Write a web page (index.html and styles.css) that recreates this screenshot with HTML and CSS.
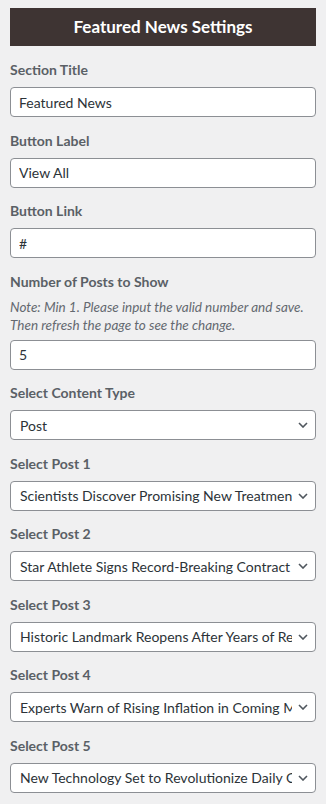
FILE: index.html
```html
<!DOCTYPE html>
<html lang="en">

<head>
    <meta charset="UTF-8">
    <meta name="viewport" content="width=device-width, initial-scale=1.0">
    <title>Featured News Settings</title>
    <link rel="stylesheet" href="styles.css">
</head>

<body>
    <div class="panel">
        <h2 class="panel-title">Featured News Settings</h2>

        <div class="field">
            <label for="section-title">Section Title</label>
            <input id="section-title" class="text-input" type="text" value="Featured News">
        </div>

        <div class="field">
            <label for="button-label">Button Label</label>
            <input id="button-label" class="text-input" type="text" value="View All">
        </div>

        <div class="field">
            <label for="button-link">Button Link</label>
            <input id="button-link" class="text-input" type="text" value="#">
        </div>

        <div class="field">
            <label for="post-count">Number of Posts to Show</label>
            <p class="note">Note: Min 1. Please input the valid number and save. Then refresh the page to see the change.</p>
            <input id="post-count" class="text-input" type="text" value="5">
        </div>

        <div class="field">
            <label for="content-type">Select Content Type</label>
            <div class="select-wrap">
                <select id="content-type" class="select">
                    <option>Post</option>
                </select>
                <svg class="chevron" viewBox="0 0 10 6"><path d="M1 1 L5 5 L9 1" /></svg>
            </div>
        </div>

        <div class="field">
            <label for="post-1">Select Post 1</label>
            <div class="select-wrap">
                <select id="post-1" class="select">
                    <option>Scientists Discover Promising New Treatment for Alzheimer's</option>
                </select>
                <svg class="chevron" viewBox="0 0 10 6"><path d="M1 1 L5 5 L9 1" /></svg>
            </div>
        </div>

        <div class="field">
            <label for="post-2">Select Post 2</label>
            <div class="select-wrap">
                <select id="post-2" class="select">
                    <option>Star Athlete Signs Record-Breaking Contract</option>
                </select>
                <svg class="chevron" viewBox="0 0 10 6"><path d="M1 1 L5 5 L9 1" /></svg>
            </div>
        </div>

        <div class="field">
            <label for="post-3">Select Post 3</label>
            <div class="select-wrap">
                <select id="post-3" class="select">
                    <option>Historic Landmark Reopens After Years of Restoration</option>
                </select>
                <svg class="chevron" viewBox="0 0 10 6"><path d="M1 1 L5 5 L9 1" /></svg>
            </div>
        </div>

        <div class="field">
            <label for="post-4">Select Post 4</label>
            <div class="select-wrap">
                <select id="post-4" class="select">
                    <option>Experts Warn of Rising Inflation in Coming Months</option>
                </select>
                <svg class="chevron" viewBox="0 0 10 6"><path d="M1 1 L5 5 L9 1" /></svg>
            </div>
        </div>

        <div class="field">
            <label for="post-5">Select Post 5</label>
            <div class="select-wrap">
                <select id="post-5" class="select">
                    <option>New Technology Set to Revolutionize Daily Commutes</option>
                </select>
                <svg class="chevron" viewBox="0 0 10 6"><path d="M1 1 L5 5 L9 1" /></svg>
            </div>
        </div>
    </div>
</body>

</html>
```

FILE: styles.css
```css
body {
    margin: 0;
    background: #f0f0f1;
    font-family: Lato, "Noto Sans", sans-serif;
    color: #2c3338;
}

.panel {
    padding: 8px 10px;
}

.panel-title {
    margin: 0 0 14px;
    height: 38px;
    line-height: 38px;
    background: #3e3433;
    color: #fff;
    font-size: 17px;
    font-weight: 700;
    text-align: center;
}

.field {
    display: flex;
    flex-direction: column;
    margin-bottom: 13.5px;
}

.field label {
    font-size: 14px;
    line-height: 20px;
    font-weight: 700;
    color: #5a6066;
    margin-bottom: 7px;
}

.note {
    margin: -1px 0 6px;
    font-size: 13.5px;
    line-height: 18px;
    font-style: italic;
    color: #646970;
}

.text-input,
.select {
    box-sizing: border-box;
    width: 100%;
    height: 30px;
    margin: 0;
    padding: 0 8px;
    border: 1px solid #8c8f94;
    border-radius: 4px;
    background: #fff;
    font-family: inherit;
    font-size: 14px;
    color: #2c3338;
}

.select-wrap {
    position: relative;
}

.select {
    appearance: none;
    -webkit-appearance: none;
    padding: 0 23px 0 9px;
    cursor: pointer;
}

.chevron {
    position: absolute;
    right: 8px;
    top: 12px;
    width: 10px;
    height: 6px;
    pointer-events: none;
}

.chevron path {
    fill: none;
    stroke: #50575e;
    stroke-width: 1.6;
}
```
